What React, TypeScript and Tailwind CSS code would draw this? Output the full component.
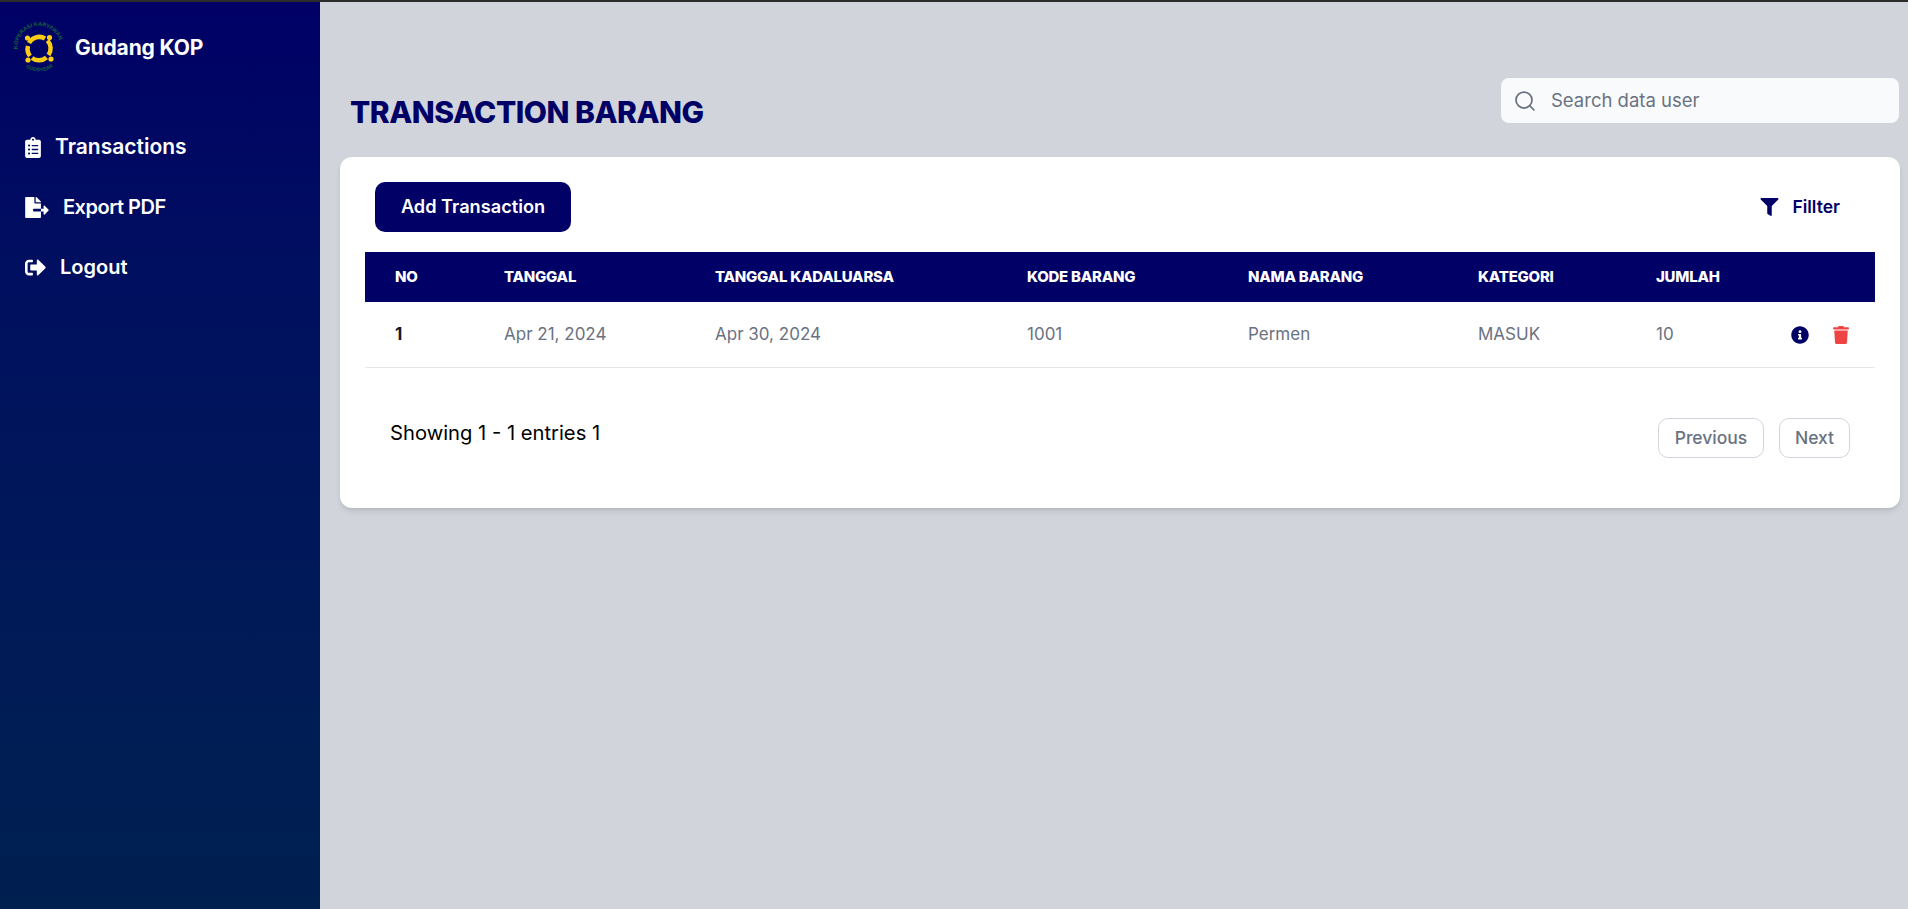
import { FaClipboardList, FaFileExport, FaSignOutAlt, FaFilter, FaInfoCircle, FaTrash } from "react-icons/fa";
import { Search } from "lucide-react";

const columns = [
  { label: "NO", width: "w-[109px]" },
  { label: "TANGGAL", width: "w-[211px]" },
  { label: "TANGGAL KADALUARSA", width: "w-[312px]" },
  { label: "KODE BARANG", width: "w-[221px]" },
  { label: "NAMA BARANG", width: "w-[230px]" },
  { label: "KATEGORI", width: "w-[178px]" },
  { label: "JUMLAH", width: "w-[135px]" },
];

const row = ["Apr 21, 2024", "Apr 30, 2024", "1001", "Permen", "MASUK", "10"];

const cellWidths = ["w-[211px]", "w-[312px]", "w-[221px]", "w-[230px]", "w-[178px]", "w-[135px]"];

function Logo() {
  return (
    <svg viewBox="0 0 52 52" className="w-[52px] h-[52px] shrink-0">
      <defs>
        <path id="logo-top" d="M5 30 A21.5 21.5 0 1 1 47 30" />
        <path id="logo-bottom" d="M9 42 A23.3 23.3 0 0 0 43 42" />
      </defs>
      <text fontSize="5.5" fontWeight="700" fill="#166534" fontFamily="Liberation Sans, sans-serif">
        <textPath href="#logo-top" startOffset="3">KOPERASI KARYAWAN</textPath>
      </text>
      <text fontSize="5" fontWeight="700" fill="#166534" fontFamily="Liberation Sans, sans-serif">
        <textPath href="#logo-bottom" startOffset="5">GOODYEAR</textPath>
      </text>
      {/* four swooping arms, one running from each head */}
      <path d="M16 21 A11.5 11.5 0 0 1 32 16.5" fill="none" stroke="#facc15" strokeWidth="4.5" />
      <path d="M34.5 18.5 A11.5 11.5 0 0 1 35.5 33" fill="none" stroke="#facc15" strokeWidth="4.5" />
      <path d="M33.5 35.5 A11.5 11.5 0 0 1 19 36" fill="none" stroke="#facc15" strokeWidth="4.5" />
      <path d="M17 34 A11.5 11.5 0 0 1 15 24" fill="none" stroke="#facc15" strokeWidth="4.5" />
      <circle cx="14.5" cy="16" r="2.6" fill="#facc15" />
      <circle cx="36.5" cy="15.5" r="2.6" fill="#facc15" />
      <circle cx="15" cy="38" r="2.6" fill="#facc15" />
      <circle cx="38" cy="37" r="2.6" fill="#facc15" />
    </svg>
  );
}

export default function App() {
  return (
    <div className="flex h-screen flex-col overflow-hidden bg-[#d1d5db] font-['Inter',sans-serif]">
      <div className="h-[2px] shrink-0 bg-[#2b2b2b]" />
      <div className="flex flex-1 min-h-0">
        <aside className="w-[320px] shrink-0 bg-gradient-to-b from-[#000066] to-[#002050] text-white">
          <div className="flex items-center gap-[10px] pl-[13px] pt-[20px]">
            <Logo />
            <span className="text-[21px] font-bold tracking-[-0.15px]">Gudang KOP</span>
          </div>
          <nav className="mt-[43px] flex flex-col font-semibold text-[20px]">
            <a className="flex h-[60px] items-center pl-[25px]">
              <FaClipboardList className="w-[16px] h-[21px]" />
              <span className="ml-[14px] text-[21px]">Transactions</span>
            </a>
            <a className="flex h-[60px] items-center pl-[25px]">
              <FaFileExport className="w-[24px] h-[21px]" />
              <span className="ml-[14px] tracking-[-0.5px]">Export PDF</span>
            </a>
            <a className="flex h-[60px] items-center pl-[25px]">
              <FaSignOutAlt className="w-[21px] h-[21px]" />
              <span className="ml-[14px]">Logout</span>
            </a>
          </nav>
        </aside>

        <main className="flex-1 min-w-0 pl-[20px] pr-[8px]">
          <div className="flex h-[155px] items-start justify-between">
            <h1 className="mt-[88px] ml-[10px] text-[30px] leading-[44px] font-extrabold tracking-[-0.5px] text-[#000066]">
              TRANSACTION BARANG
            </h1>
            <div className="mt-[76px] mr-[1px] flex h-[45px] w-[398px] items-center rounded-lg bg-gray-50 pl-[12px]">
              <Search className="w-[24px] h-[24px] text-gray-500" strokeWidth={1.75} />
              <span className="ml-[14px] text-[18.5px] text-gray-500">Search data user</span>
            </div>
          </div>

          <section className="h-[351px] rounded-xl bg-white pt-[25px] shadow-md">
            <div className="flex items-center justify-between pl-[35px] pr-[60px]">
              <button className="h-[50px] w-[196px] rounded-[10px] bg-[#000066] text-[18.2px] font-semibold text-white">
                Add Transaction
              </button>
              <button className="flex items-center gap-[13px] text-[17.5px] font-semibold text-[#000066]">
                <FaFilter className="w-[19px] h-[18px]" />
                Fillter
              </button>
            </div>

            <div className="ml-[25px] mr-[25px] mt-[20px]">
              <div className="flex h-[50px] items-center bg-[#000066] pl-[30px] text-[15px] font-extrabold text-white tracking-[-0.25px]">
                {columns.map((col) => (
                  <div key={col.label} className={col.width}>
                    {col.label}
                  </div>
                ))}
              </div>
              <div className="flex h-[66px] items-center border-b border-gray-200 pl-[30px] text-[17px] text-gray-500">
                <div className="w-[109px] font-bold text-gray-900">1</div>
                {row.map((value, i) => (
                  <div key={value} className={cellWidths[i]}>
                    {value}
                  </div>
                ))}
                <div className="flex items-center gap-[24px]">
                  <FaInfoCircle className="w-[18px] h-[18px] text-[#000066]" />
                  <FaTrash className="w-[16px] h-[18px] text-[#ef4444]" />
                </div>
              </div>
            </div>

            <div className="flex items-start justify-between pl-[50px] pr-[50px] pt-[50px]">
              <p className="text-[20.2px] text-black">Showing 1 - 1 entries 1</p>
              <div className="flex gap-[15px]">
                <button className="h-[40px] w-[106px] rounded-[10px] border border-gray-300 text-[17.5px] font-medium text-gray-500">
                  Previous
                </button>
                <button className="h-[40px] w-[71px] rounded-[10px] border border-gray-300 text-[17.5px] font-medium text-gray-500">
                  Next
                </button>
              </div>
            </div>
          </section>
        </main>
      </div>
    </div>
  );
}
